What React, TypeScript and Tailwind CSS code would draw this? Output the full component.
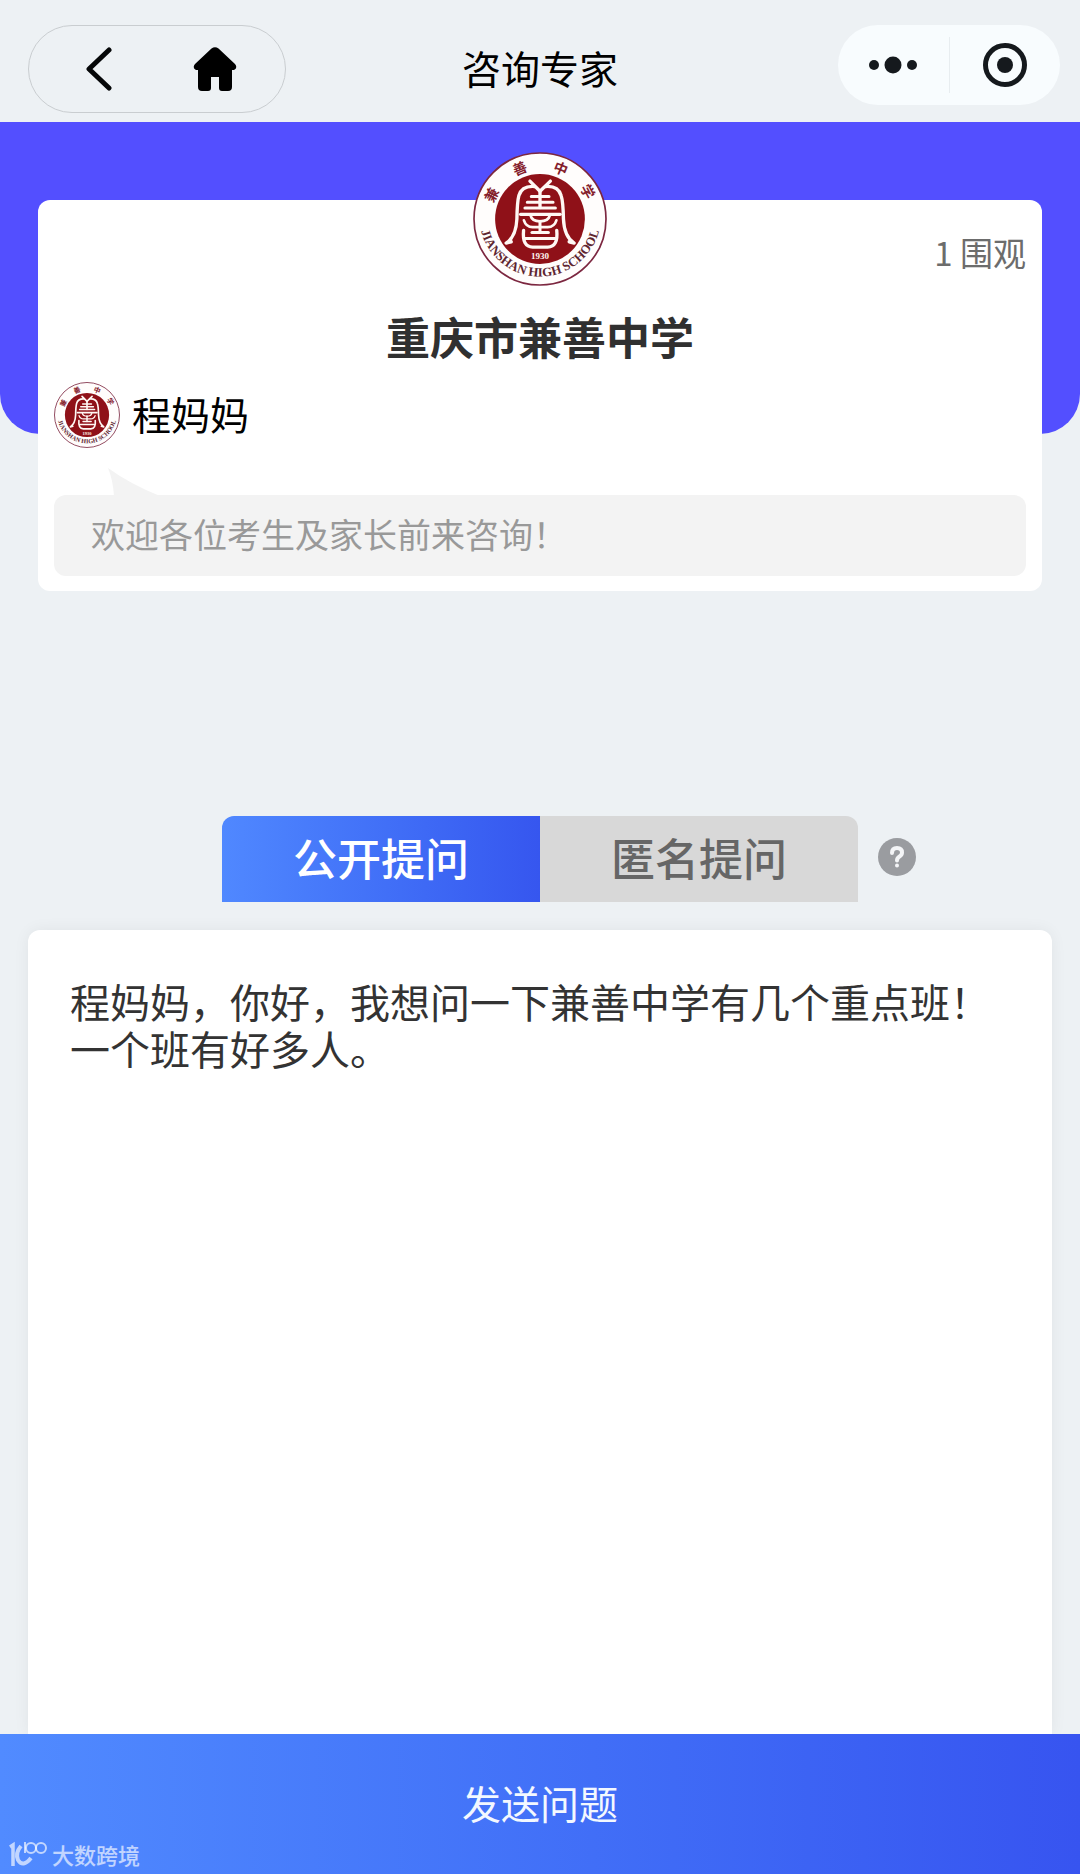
import { useState } from 'react'

interface Tab {
  id: string;
  label: string;
}

const tabs: Tab[] = [
  { id: 'public', label: '公开提问' },
  { id: 'anonymous', label: '匿名提问' },
]

function SchoolSeal({ id, className }: { id: string; className: string }) {
  return (
    <svg viewBox="0 0 400 400" className={className} role="img" aria-label="重庆市兼善中学">
      <circle cx="200" cy="200" r="197" fill="#fffdfc" stroke="#7c2740" strokeWidth="5" />
      <circle cx="200" cy="200" r="134" fill="#8f1118" />
      <g fill="none" stroke="#fff8f4" strokeWidth="10" strokeLinecap="round" strokeLinejoin="round">
        <path d="M170 87 L200 117 L231 87" />
        <path d="M184 103 Q146 100 137 130 Q132 148 131 200 Q129 252 99 272 L114 268" />
        <path d="M217 103 Q254 100 263 130 Q269 148 270 200 Q272 252 302 272 L287 268" />
        <path d="M200 117 V166" />
        <path d="M174 133 H227 M162 150 H239 M155 167 H246" strokeWidth="9" />
        <path d="M142 186 H260" />
        <path d="M172 190 Q176 207 200 207 Q225 207 229 190" strokeWidth="8" />
        <path d="M152 204 Q158 224 178 224 H223 Q243 224 249 204" strokeWidth="8" />
        <path d="M200 207 V239" strokeWidth="9" />
        <path d="M176 240 H225" strokeWidth="9" />
        <path d="M151 234 Q146 283 178 284 H223 Q255 283 250 234" />
        <path d="M156 258 H245" strokeWidth="9" />
      </g>
      <text x="200" y="320" textAnchor="middle" fontSize="27" fill="#fff4ee" className="font-['Liberation_Serif'] font-bold">1930</text>
      <g fill="#84202c" fontSize="42" textAnchor="middle" className="font-['Noto_Sans_CJK_SC',sans-serif] font-bold">
        <text transform="translate(56 128) rotate(-63)" y="15">兼</text>
        <text transform="translate(140 50) rotate(-22)" y="15">善</text>
        <text transform="translate(262 50) rotate(22)" y="15">中</text>
        <text transform="translate(342 118) rotate(62)" y="15">学</text>
      </g>
      <path id={id} d="M18 190 A182 182 0 0 0 382 190" fill="none" />
      <text fontSize="38" fill="#5e2530" textAnchor="middle" className="font-['Liberation_Serif'] font-bold">
        <textPath href={`#${id}`} startOffset="50%">JIANSHAN HIGH SCHOOL</textPath>
      </text>
    </svg>
  )
}

function Header() {
  return (
    <header className="grid h-[122px] grid-cols-[1fr_auto_1fr] items-center px-5">
      <div className="mt-4 ml-2 flex h-[88px] w-[258px] items-center justify-between rounded-full border border-[#c9cdd0] px-12">
        <button type="button" aria-label="返回" className="flex h-11 w-11 items-center justify-center">
          <svg viewBox="0 0 44 44" className="h-11 w-11" fill="none" stroke="#050708" strokeWidth="5" strokeLinecap="round" strokeLinejoin="round">
            <path d="M32 3 L12 22 L32 41" />
          </svg>
        </button>
        <button type="button" aria-label="首页">
          <svg viewBox="0 0 44 44" className="h-11 w-11" fill="#000">
            <path d="M18.500 1.500 Q22 -1 25.500 1.500 L42 17 Q45 21 41 23 H39 V40 Q39 44 35 44 H29 Q26 44 26 41 V30 H18 V41 Q18 44 15 44 H9 Q5 44 5 40 V23 H3 Q-1 21 2 17 Z" />
          </svg>
        </button>
      </div>
      <h1 className="mt-3 text-[39px] leading-[56px] text-black">咨询专家</h1>
      <div className="mt-2 flex h-20 w-[222px] items-center justify-self-end rounded-full bg-[#f8fcfe]">
        <button type="button" aria-label="更多" className="flex flex-1 justify-center">
          <svg viewBox="0 0 50 20" className="h-5 w-[50px]" fill="#15191d">
            <circle cx="6" cy="10" r="5" />
            <circle cx="25" cy="10" r="8.500" />
            <circle cx="44" cy="10" r="5" />
          </svg>
        </button>
        <span className="h-14 w-px bg-[#e8edf0]" />
        <button type="button" aria-label="关闭" className="flex flex-1 justify-center">
          <svg viewBox="0 0 44 44" className="h-11 w-11">
            <circle cx="22" cy="22" r="19.500" fill="none" stroke="#15191d" strokeWidth="5" />
            <circle cx="22" cy="22" r="8" fill="#15191d" />
          </svg>
        </button>
      </div>
    </header>
  )
}

function ExpertCard() {
  return (
    <section className="mx-[38px] -mt-[234px] rounded-xl bg-white px-4 pb-[15px]">
      <div className="grid grid-cols-[1fr_auto_1fr]">
        <SchoolSeal id="seal-large" className="col-start-2 -mt-12 h-[134px] w-[134px]" />
        <p className="mt-7 text-right text-[33px] leading-[48px] text-[#6c6c6c]">1 围观</p>
      </div>
      <h2 className="mt-[22px] text-center text-[44px] leading-[56px] font-bold text-[#303030]">重庆市兼善中学</h2>
      <div className="mt-[18px] flex items-center gap-3">
        <SchoolSeal id="seal-small" className="h-[66px] w-[66px]" />
        <span className="pb-1 text-[39px] leading-[56px] text-black">程妈妈</span>
      </div>
      <svg viewBox="0 0 52 28" className="mt-5 ml-[54px] h-7 w-[52px]" fill="#f3f3f3">
        <path d="M0 0 Q22 16 52 28 H6 Q5 12 0 0 Z" />
      </svg>
      <p className="-mt-px rounded-xl bg-[#f3f3f3] px-[37px] pt-[14px] pb-[18px] text-[34px] leading-[49px] text-[#999]">欢迎各位考生及家长前来咨询！</p>
    </section>
  )
}

export default function App() {
  const [active, setActive] = useState('public')
  const [question, setQuestion] = useState('程妈妈，你好，我想问一下兼善中学有几个重点班！\n一个班有好多人。')

  return (
    <div className="flex min-h-screen flex-col bg-[#edf1f4] font-['Noto_Sans_CJK_SC',sans-serif]">
      <Header />
      <div className="h-[312px] rounded-b-[40px] bg-[#534fff]" />
      <ExpertCard />

      <main className="mt-[225px] flex flex-1 flex-col">
        <div className="grid grid-cols-[1fr_auto_1fr] items-center">
          <div role="tablist" className="col-start-2 flex overflow-hidden rounded-t-xl">
            {tabs.map(({ id, label }) => (
              <button
                key={id}
                type="button"
                role="tab"
                aria-selected={active === id}
                onClick={() => setActive(id)}
                className={`h-[86px] w-[318px] pb-1 text-[44px] leading-[56px] font-medium ${active === id ? 'bg-linear-to-r from-[#5088ff] to-[#3656ef] text-white' : 'bg-[#d8d8d8] text-[#666]'}`}
              >
                {label}
              </button>
            ))}
          </div>
          <button type="button" aria-label="帮助" className="mb-1 ml-5 flex h-[38px] w-[38px] items-center justify-center rounded-full bg-[#9a9ca0]">
            <svg viewBox="0 0 38 38" className="h-[38px] w-[38px]" fill="none" stroke="#f4f5f7" strokeWidth="4" strokeLinecap="round">
              <path d="M14 15 Q14 10 19 10 Q24 10 24 14.500 Q24 17 21.500 18.500 Q19 20 19 22.500" />
              <path d="M19 27.500 V27.600" />
            </svg>
          </button>
        </div>

        <textarea
          aria-label="问题内容"
          value={question}
          onChange={(e) => setQuestion(e.target.value)}
          className="mx-7 mt-7 flex-1 resize-none rounded-t-xl bg-white px-[42px] pt-12 text-[40px] leading-[47px] text-[#333] shadow-[0_0_16px_rgba(0,0,0,0.06)] outline-none"
        />
      </main>

      <footer className="relative">
        <button type="button" className="h-[140px] w-full bg-linear-to-r from-[#518bff] to-[#3754f0] pb-1 text-[39px] leading-[56px] text-[#f3f8ff]">
          发送问题
        </button>
        <div className="absolute bottom-1 left-2 flex items-center gap-1 text-[22px] leading-8 font-medium text-white/65">
          <svg viewBox="0 0 40 26" className="h-[26px] w-10" fill="none" stroke="currentColor">
            <path d="M2 6 L5 4 V25" strokeWidth="3.500" />
            <path d="M13 5 Q7 12 10 19 Q15 27 23 17" strokeWidth="4" />
            <path d="M17 1 V12" strokeWidth="2" />
            <circle cx="23" cy="7" r="5" strokeWidth="2" />
            <circle cx="33" cy="7" r="5" strokeWidth="2" />
          </svg>
          <span>大数跨境</span>
        </div>
      </footer>
    </div>
  )
}
